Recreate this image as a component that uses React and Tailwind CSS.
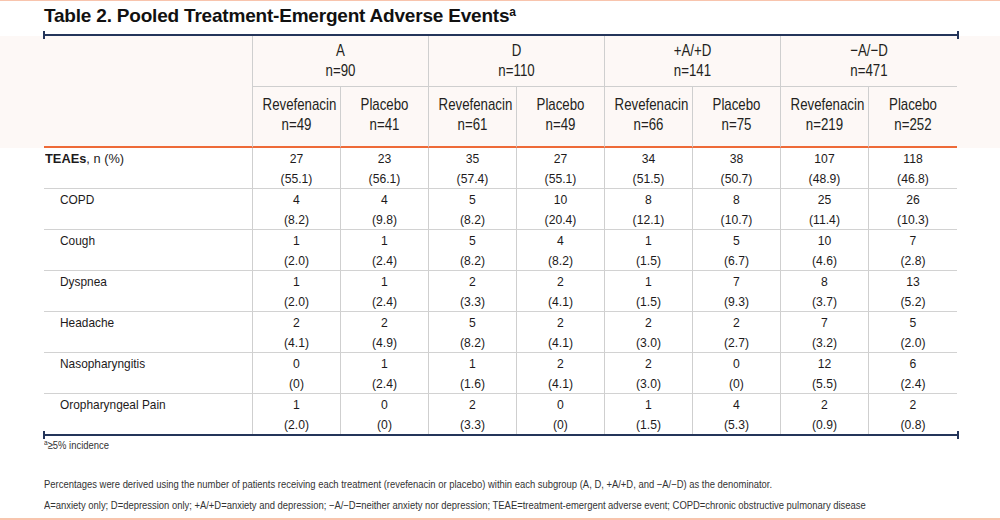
import React from 'react';

const sans = { fontFamily: '"Liberation Sans", Arial, sans-serif' };

const groups = [
  { name: 'A', n: 90, arms: [49, 41] },
  { name: 'D', n: 110, arms: [61, 49] },
  { name: '+A/+D', n: 141, arms: [66, 75] },
  { name: '\u2212A/\u2212D', n: 471, arms: [219, 252] },
];

const rows = [
  { label: 'TEAEs', bold: true, cells: ['27|55.1', '23|56.1', '35|57.4', '27|55.1', '34|51.5', '38|50.7', '107|48.9', '118|46.8'] },
  { label: 'COPD', cells: ['4|8.2', '4|9.8', '5|8.2', '10|20.4', '8|12.1', '8|10.7', '25|11.4', '26|10.3'] },
  { label: 'Cough', cells: ['1|2.0', '1|2.4', '5|8.2', '4|8.2', '1|1.5', '5|6.7', '10|4.6', '7|2.8'] },
  { label: 'Dyspnea', cells: ['1|2.0', '1|2.4', '2|3.3', '2|4.1', '1|1.5', '7|9.3', '8|3.7', '13|5.2'] },
  { label: 'Headache', cells: ['2|4.1', '2|4.9', '5|8.2', '2|4.1', '2|3.0', '2|2.7', '7|3.2', '5|2.0'] },
  { label: 'Nasopharyngitis', cells: ['0|0', '1|2.4', '1|1.6', '2|4.1', '2|3.0', '0|0', '12|5.5', '6|2.4'] },
  { label: 'Oropharyngeal Pain', cells: ['1|2.0', '0|0', '2|3.3', '0|0', '1|1.5', '4|5.3', '2|0.9', '2|0.8'] },
];

const NavyRule = ({ className }) => (
  <div className={`relative z-10 ml-[43px] flex h-[8px] w-[916px] items-center ${className}`}>
    <div className="h-[8px] w-[2px] bg-[#24355a]" />
    <div className="h-[2px] flex-1 bg-[#24355a]" />
    <div className="h-[8px] w-[2px] bg-[#24355a]" />
  </div>
);

const HeaderBand = () => (
  <div className="w-full bg-[#fdf8f6]">
    <div
      className="ml-[44px] grid grid-cols-[209px_repeat(8,88px)] grid-rows-[51px_61px] text-[17px] leading-[20px] text-[#231f20]"
      style={sans}
    >
      <div className="row-span-2 border-r border-b-2 border-r-[#cfcfcf] border-b-[#ee6a38]" />
      {groups.map((g, i) => (
        <div
          key={g.name}
          className={`col-span-2 border-b border-b-[#cfcfcf] pt-[5px] text-center ${i < 3 ? 'border-r border-r-[#cfcfcf]' : ''}`}
        >
          <div className="scale-x-[0.78]">
            <div>{g.name}</div>
            <div>n={g.n}</div>
          </div>
        </div>
      ))}
      {groups.map((g, i) =>
        g.arms.map((n, j) => (
          <div
            key={`${g.name}-${j}`}
            className={`border-b-2 border-b-[#ee6a38] pt-[8px] text-center ${i === 3 && j === 1 ? '' : 'border-r border-r-[#cfcfcf]'}`}
          >
            <div className="scale-x-[0.78] whitespace-nowrap">
              <div>{j === 0 ? 'Revefenacin' : 'Placebo'}</div>
              <div>n={n}</div>
            </div>
          </div>
        )),
      )}
    </div>
  </div>
);

const DataRows = () => (
  <div
    className="ml-[44px] grid w-[913px] grid-cols-[209px_repeat(8,88px)] text-[13.5px] leading-[20px] text-[#1d1a1b]"
    style={sans}
  >
    {rows.map((r, ri) => {
      const last = ri === rows.length - 1;
      const rowLine = last ? '' : 'border-b border-b-[#d2d2d2]';
      return (
        <React.Fragment key={r.label}>
          <div className={`h-[41px] border-r border-r-[#cfcfcf] pt-px ${rowLine} ${r.bold ? 'pl-px' : 'pl-[16px]'}`}>
            <div className={`origin-left whitespace-nowrap ${r.bold ? 'scale-x-[0.95]' : 'scale-x-[0.88]'}`}>
              {r.bold ? (
                <>
                  <span className="font-bold">TEAEs</span>, n (%)
                </>
              ) : (
                r.label
              )}
            </div>
          </div>
          {r.cells.map((c, ci) => {
            const [n, pct] = c.split('|');
            return (
              <div
                key={ci}
                className={`h-[41px] pt-px text-center ${rowLine} ${ci < 7 ? 'border-r border-r-[#cfcfcf]' : ''}`}
              >
                <div className="scale-x-[0.9]">
                  <div>{n}</div>
                  <div>({pct})</div>
                </div>
              </div>
            );
          })}
        </React.Fragment>
      );
    })}
  </div>
);

export default function App() {
  return (
    <div className="flex h-[520px] w-[1000px] flex-col overflow-hidden bg-white">
      <div className="h-px w-full bg-[#f8c4ad]" />
      <div
        className="pl-[44px] pt-[3px] text-[19px] font-bold leading-[24px] tracking-[-0.2px] text-[#111111]"
        style={sans}
      >
        Table 2. Pooled Treatment-Emergent Adverse Events<sup className="text-[12px]">a</sup>
      </div>
      <NavyRule className="mt-[3px] -mb-[3px]" />
      <HeaderBand />
      <DataRows />
      <NavyRule className="-mt-[4px]" />
      <div className="pl-[44px] text-[11.5px] leading-[14px] text-[#333333]" style={sans}>
        <div className="-mt-px origin-left scale-x-[0.82] whitespace-nowrap">
          <sup className="text-[8px]">a</sup>≥5% incidence
        </div>
        <div className="mt-[25px] origin-left scale-x-[0.82] whitespace-nowrap">
          Percentages were derived using the number of patients receiving each treatment (revefenacin or placebo) within each
          subgroup (A, D, +A/+D, and −A/−D) as the denominator.
        </div>
        <div className="mt-[7px] origin-left scale-x-[0.82] whitespace-nowrap">
          A=anxiety only; D=depression only; +A/+D=anxiety and depression; −A/−D=neither anxiety nor depression;
          TEAE=treatment-emergent adverse event; COPD=chronic obstructive pulmonary disease
        </div>
      </div>
      <div className="mt-auto h-[2px] w-full bg-[#f8c4ad]" />
    </div>
  );
}
